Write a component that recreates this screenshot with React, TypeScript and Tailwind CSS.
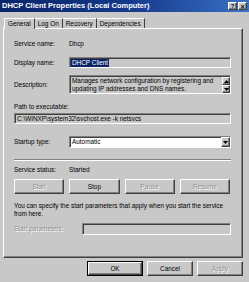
import React from 'react'

const raised = 'border border-t-white border-l-white border-r-[#404040] border-b-[#404040] shadow-[inset_-1px_-1px_0_#808080]'
const sunken = 'border border-t-[#808080] border-l-[#808080] border-r-white border-b-white shadow-[inset_1px_1px_0_#404040]'

function Btn({ label, disabled, className = '' }: { label: string; disabled?: boolean; className?: string }) {
    return (
        <div
            className={`${raised} bg-[#c8c8c8] h-[15px] flex items-center justify-center ${className} ${
                disabled ? 'text-[#909090] [text-shadow:1px_1px_0_#fff]' : 'text-black'
            }`}
        >
            {label}
        </div>
    )
}

function Row({ label, children, className = '' }: { label: string; children: React.ReactNode; className?: string }) {
    return (
        <div className={`flex items-center ${className}`}>
            <div className="w-[55px] shrink-0">{label}</div>
            {children}
        </div>
    )
}

export default function App() {
    return (
        <div
            className="w-[249px] h-[282px] bg-[#c8c8c8] flex flex-col text-[6.4px] leading-[8px] text-black overflow-hidden"
            style={{ fontFamily: '"Liberation Sans", Arial, sans-serif' }}
        >
            {/* title bar */}
            <div className="h-[12px] shrink-0 flex items-center justify-between pl-[2px] pr-[2px] bg-gradient-to-r from-[#0a246a] via-[#14388a] to-[#3a70c4]">
                <span className="text-white font-bold text-[7.5px]">DHCP Client Properties (Local Computer)</span>
                <div className="flex gap-[1px]">
                    <div className={`${raised} w-[9px] h-[8px] bg-[#c8c8c8] flex items-center justify-center text-[6px] font-bold leading-none`}>?</div>
                    <div className={`${raised} w-[9px] h-[8px] bg-[#c8c8c8] flex items-center justify-center text-[7px] font-bold leading-none`}>×</div>
                </div>
            </div>

            {/* tabs */}
            <div className="flex items-end pl-[4px] mt-[5px] h-[11px] shrink-0">
                <div className="h-[11px] px-[3px] flex items-center border-t border-l border-t-white border-l-white border-r border-r-[#404040] bg-[#c8c8c8] relative top-[1px] z-10">General</div>
                <div className="h-[10px] px-[3px] flex items-center border-t border-t-white border-r border-r-[#404040]">Log On</div>
                <div className="h-[10px] px-[3px] flex items-center border-t border-t-white border-r border-r-[#404040]">Recovery</div>
                <div className="h-[10px] px-[3px] flex items-center border-t border-t-white border-r border-r-[#404040]">Dependencies</div>
            </div>

            {/* panel */}
            <div className={`${raised} mx-[3px] w-[240px] h-[230px] shrink-0 pl-[10px] pr-[11px] pt-[10px] flex flex-col`}>
                <Row label="Service name:" className="h-[10px]">
                    <span>Dhcp</span>
                </Row>
                <Row label="Display name:" className="h-[11px] mt-[8px]">
                    <div className={`${sunken} bg-[#c8c8c8] flex-1 h-[11px] flex items-center pl-[1px]`}>
                        <span className="bg-[#0a246a] text-white px-[1px]">DHCP Client</span>
                    </div>
                </Row>
                <Row label="Description:" className="h-[19px] mt-[7px]">
                    <div className={`${sunken} bg-[#c8c8c8] flex-1 h-[19px] flex pl-[2px] pt-[1px]`}>
                        <div className="flex-1 leading-[8px]">
                            Manages network configuration by registering and updating IP addresses and DNS names.
                        </div>
                        <div className="w-[8px] flex flex-col">
                            <div className={`${raised} h-[8px] bg-[#c8c8c8] flex items-center justify-center`}>
                                <svg width="5" height="3" viewBox="0 0 5 3"><path d="M2.5 0 L5 3 L0 3Z" fill="#000" /></svg>
                            </div>
                            <div className={`${raised} h-[8px] bg-[#c8c8c8] flex items-center justify-center`}>
                                <svg width="5" height="3" viewBox="0 0 5 3"><path d="M0 0 L5 0 L2.5 3Z" fill="#000" /></svg>
                            </div>
                        </div>
                    </div>
                </Row>
                <div className="mt-[9px] h-[9px]">Path to executable:</div>
                <div className={`${sunken} bg-[#c8c8c8] h-[11px] mt-[1px] flex items-center pl-[2px]`}>
                    C:\WINXP\system32\svchost.exe -k netsvcs
                </div>
                <Row label="Startup type:" className="h-[12px] mt-[12px]">
                    <div className={`${sunken} bg-white flex-1 h-[12px] flex items-center pl-[2px]`}>
                        <span className="flex-1">Automatic</span>
                        <div className={`${raised} w-[9px] h-[10px] bg-[#c8c8c8] flex items-center justify-center`}>
                            <svg width="5" height="3" viewBox="0 0 5 3"><path d="M0 0 L5 0 L2.5 3Z" fill="#000" /></svg>
                        </div>
                    </div>
                </Row>
                <div className="mt-[11px] h-[2px] border-t border-t-[#808080] border-b border-b-white" />
                <Row label="Service status:" className="h-[10px] mt-[4px]">
                    <span>Started</span>
                </Row>
                <div className="flex gap-[5px] mt-[4px] pr-[1px]">
                    <Btn label="Start" disabled className="w-[52px]" />
                    <Btn label="Stop" className="w-[52px]" />
                    <Btn label="Pause" disabled className="w-[52px]" />
                    <Btn label="Resume" disabled className="w-[52px]" />
                </div>
                <div className="mt-[8px] leading-[8px]">
                    You can specify the start parameters that apply when you start the service from here.
                </div>
                <div className="flex items-center mt-[5px] h-[12px]">
                    <div className="w-[68px] shrink-0 text-[#909090] [text-shadow:1px_1px_0_#fff]">Start parameters:</div>
                    <div className={`${sunken} bg-[#c8c8c8] flex-1 h-[12px]`} />
                </div>
            </div>

            {/* bottom buttons */}
            <div className="flex justify-end gap-[4px] mt-[3px] pr-[6px]">
                <div className="w-[56px] h-[15px] border border-black">
                    <Btn label="OK" className="h-full" />
                </div>
                <Btn label="Cancel" className="w-[46px]" />
                <Btn label="Apply" disabled className="w-[46px]" />
            </div>
        </div>
    )
}
